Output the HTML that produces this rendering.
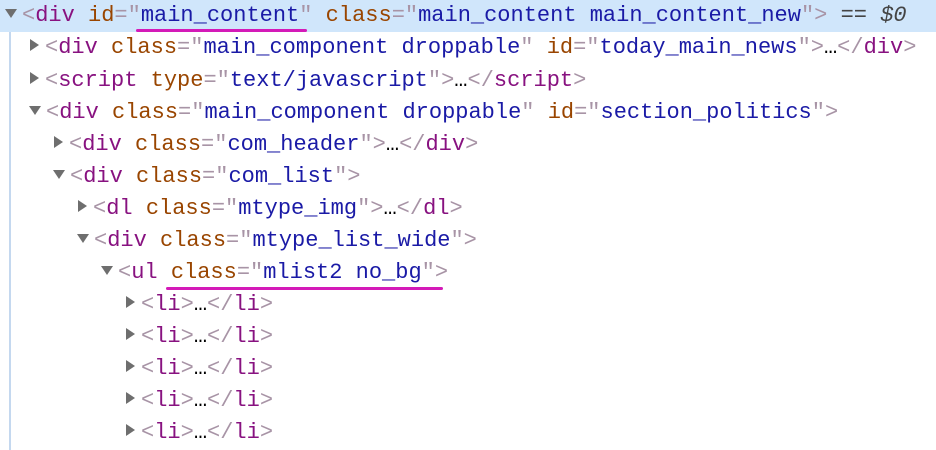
<!DOCTYPE html>
<html><head><style>
body{margin:0;width:936px;height:450px;overflow:hidden;background:#fff;font-family:"Liberation Mono",monospace;font-size:22px;position:relative}
.r{position:absolute;left:0;width:936px;height:32px;line-height:32px;white-space:pre}
.t{color:#881280}.b{color:#a894a6}.n{color:#994500}.v{color:#1a1aa6}.g{color:#a0a0a0}
.tri{display:inline-block;width:0;height:0;vertical-align:middle;position:relative;top:-2px}
.c{border-left:9px solid #6e6e6e;border-top:6px solid transparent;border-bottom:6px solid transparent;margin-right:6px;margin-left:2px}
.o{border-top:9px solid #6e6e6e;border-left:6px solid transparent;border-right:6px solid transparent;margin-right:5px}
.u{position:absolute;height:3px;background:#d41ab8;border-radius:2px}
</style></head><body>
<div style="position:absolute;left:0;top:0;width:936px;height:32px;background:#d0e6fb"></div>
<div style="position:absolute;left:9px;top:32px;width:2px;height:418px;background:#c4d8ef"></div>
<div class="r" style="top:0;padding-left:5px"><span class="tri o"></span><span class="b">&lt;</span><span class="t">div</span> <span class="n">id</span><span class="b">="</span><span class="v">main_content</span><span class="b">"</span> <span class="n">class</span><span class="b">="</span><span class="v">main_content main_content_new</span><span class="b">"&gt;</span> <span style="color:#444">== <i>$0</i></span></div>
<div class="r" style="top:32px;padding-left:28px"><span class="tri c"></span><span class="b">&lt;</span><span class="t">div</span> <span class="n">class</span><span class="b">="</span><span class="v">main_component droppable</span><span class="b">"</span> <span class="n">id</span><span class="b">="</span><span class="v">today_main_news</span><span class="b">"&gt;</span>…<span class="b">&lt;/</span><span class="t">div</span><span class="b">&gt;</span></div>
<div class="r" style="top:64.5px;padding-left:28px"><span class="tri c"></span><span class="b">&lt;</span><span class="t">script</span> <span class="n">type</span><span class="b">="</span><span class="v">text/javascript</span><span class="b">"&gt;</span>…<span class="b">&lt;/</span><span class="t">script</span><span class="b">&gt;</span></div>
<div class="r" style="top:97px;padding-left:29px"><span class="tri o"></span><span class="b">&lt;</span><span class="t">div</span> <span class="n">class</span><span class="b">="</span><span class="v">main_component droppable</span><span class="b">"</span> <span class="n">id</span><span class="b">="</span><span class="v">section_politics</span><span class="b">"&gt;</span></div>
<div class="r" style="top:129px;padding-left:52px"><span class="tri c"></span><span class="b">&lt;</span><span class="t">div</span> <span class="n">class</span><span class="b">="</span><span class="v">com_header</span><span class="b">"&gt;</span>…<span class="b">&lt;/</span><span class="t">div</span><span class="b">&gt;</span></div>
<div class="r" style="top:161px;padding-left:53px"><span class="tri o"></span><span class="b">&lt;</span><span class="t">div</span> <span class="n">class</span><span class="b">="</span><span class="v">com_list</span><span class="b">"&gt;</span></div>
<div class="r" style="top:193px;padding-left:76px"><span class="tri c"></span><span class="b">&lt;</span><span class="t">dl</span> <span class="n">class</span><span class="b">="</span><span class="v">mtype_img</span><span class="b">"&gt;</span>…<span class="b">&lt;/</span><span class="t">dl</span><span class="b">&gt;</span></div>
<div class="r" style="top:225px;padding-left:77px"><span class="tri o"></span><span class="b">&lt;</span><span class="t">div</span> <span class="n">class</span><span class="b">="</span><span class="v">mtype_list_wide</span><span class="b">"&gt;</span></div>
<div class="r" style="top:257px;padding-left:101px"><span class="tri o"></span><span class="b">&lt;</span><span class="t">ul</span> <span class="n">class</span><span class="b">="</span><span class="v">mlist2 no_bg</span><span class="b">"&gt;</span></div>
<div class="r" style="top:289px;padding-left:124px"><span class="tri c"></span><span class="b">&lt;</span><span class="t">li</span><span class="b">&gt;</span>…<span class="b">&lt;/</span><span class="t">li</span><span class="b">&gt;</span></div>
<div class="r" style="top:321px;padding-left:124px"><span class="tri c"></span><span class="b">&lt;</span><span class="t">li</span><span class="b">&gt;</span>…<span class="b">&lt;/</span><span class="t">li</span><span class="b">&gt;</span></div>
<div class="r" style="top:353px;padding-left:124px"><span class="tri c"></span><span class="b">&lt;</span><span class="t">li</span><span class="b">&gt;</span>…<span class="b">&lt;/</span><span class="t">li</span><span class="b">&gt;</span></div>
<div class="r" style="top:385px;padding-left:124px"><span class="tri c"></span><span class="b">&lt;</span><span class="t">li</span><span class="b">&gt;</span>…<span class="b">&lt;/</span><span class="t">li</span><span class="b">&gt;</span></div>
<div class="r" style="top:417px;padding-left:124px"><span class="tri c"></span><span class="b">&lt;</span><span class="t">li</span><span class="b">&gt;</span>…<span class="b">&lt;/</span><span class="t">li</span><span class="b">&gt;</span></div>
<div class="u" style="left:136px;top:29px;width:171px"></div>
<div class="u" style="left:166px;top:287px;width:277px"></div>
</body></html>
